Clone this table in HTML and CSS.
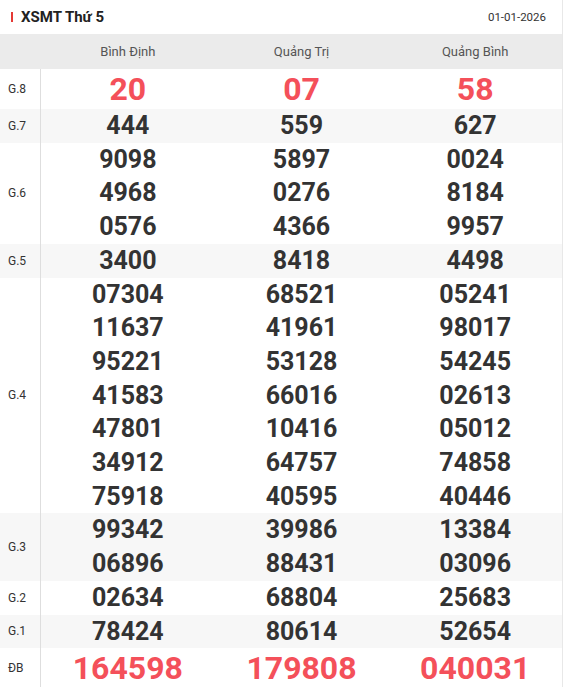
FILE: index.html
```html
<!DOCTYPE html>
<html lang="vi">
<head>
<meta charset="utf-8">
<link rel="stylesheet" href="styles.css">
</head>
<body>
<div class="box">
  <div class="top">
    <div class="title"><span class="mark"></span>XSMT Thứ 5</div>
    <div class="date">01-01-2026</div>
  </div>
  <div class="row head">
    <div class="lbl"></div>
    <div class="col">Bình Định</div>
    <div class="col">Quảng Trị</div>
    <div class="col">Quảng Bình</div>
  </div>
  <div class="row g8">
    <div class="lbl">G.8</div>
    <div class="col red big">20</div>
    <div class="col red big">07</div>
    <div class="col red big">58</div>
  </div>
  <div class="row alt">
    <div class="lbl">G.7</div>
    <div class="col num"><div>444</div></div>
    <div class="col num"><div>559</div></div>
    <div class="col num"><div>627</div></div>
  </div>
  <div class="row">
    <div class="lbl">G.6</div>
    <div class="col num"><div>9098</div><div>4968</div><div>0576</div></div>
    <div class="col num"><div>5897</div><div>0276</div><div>4366</div></div>
    <div class="col num"><div>0024</div><div>8184</div><div>9957</div></div>
  </div>
  <div class="row alt">
    <div class="lbl">G.5</div>
    <div class="col num"><div>3400</div></div>
    <div class="col num"><div>8418</div></div>
    <div class="col num"><div>4498</div></div>
  </div>
  <div class="row">
    <div class="lbl">G.4</div>
    <div class="col num"><div>07304</div><div>11637</div><div>95221</div><div>41583</div><div>47801</div><div>34912</div><div>75918</div></div>
    <div class="col num"><div>68521</div><div>41961</div><div>53128</div><div>66016</div><div>10416</div><div>64757</div><div>40595</div></div>
    <div class="col num"><div>05241</div><div>98017</div><div>54245</div><div>02613</div><div>05012</div><div>74858</div><div>40446</div></div>
  </div>
  <div class="row alt">
    <div class="lbl">G.3</div>
    <div class="col num"><div>99342</div><div>06896</div></div>
    <div class="col num"><div>39986</div><div>88431</div></div>
    <div class="col num"><div>13384</div><div>03096</div></div>
  </div>
  <div class="row">
    <div class="lbl">G.2</div>
    <div class="col num"><div>02634</div></div>
    <div class="col num"><div>68804</div></div>
    <div class="col num"><div>25683</div></div>
  </div>
  <div class="row alt">
    <div class="lbl">G.1</div>
    <div class="col num"><div>78424</div></div>
    <div class="col num"><div>80614</div></div>
    <div class="col num"><div>52654</div></div>
  </div>
  <div class="row db">
    <div class="lbl">ĐB</div>
    <div class="col red big">164598</div>
    <div class="col red big">179808</div>
    <div class="col red big">040031</div>
  </div>
</div>
</body>
</html>
```

FILE: styles.css
```css
* { box-sizing: border-box; }
html, body { margin: 0; padding: 0; background: #fff; }
body { font-family: Roboto, "Noto Sans", sans-serif; color: #333; }
.box { width: 563px; border-right: 1px solid #e8e8e8; min-height: 687px; }
.top { height: 34px; display: flex; align-items: center; justify-content: space-between; padding: 0 16px 0 11px; }
.title { display: flex; align-items: center; font-size: 15px; font-weight: 700; color: #222; }
.mark { width: 2px; height: 10px; background: #e53935; margin-right: 8px; }
.date { font-size: 11.5px; color: #333; }
.row { display: flex; }
.row.alt { background: #f7f7f7; }
.head { background: #ebebeb; height: 35px; align-items: center; }
.head .col { font-size: 13px; color: #555; }
.head .lbl { border-right: none; align-self: stretch; }
.lbl { width: 41px; flex: none; border-right: 1px solid #dedede; font-size: 12px; color: #333; display: flex; align-items: center; padding-left: 8px; }
.col { flex: 1; text-align: center; }
.num { font-size: 25px; font-weight: 700; line-height: 33.7px; color: #333; }
.big { font-size: 32px; font-weight: 700; line-height: 40px; }
.red { color: #f4505a; }
.db { height: 40px; }
.db .lbl { height: 40px; }
```
